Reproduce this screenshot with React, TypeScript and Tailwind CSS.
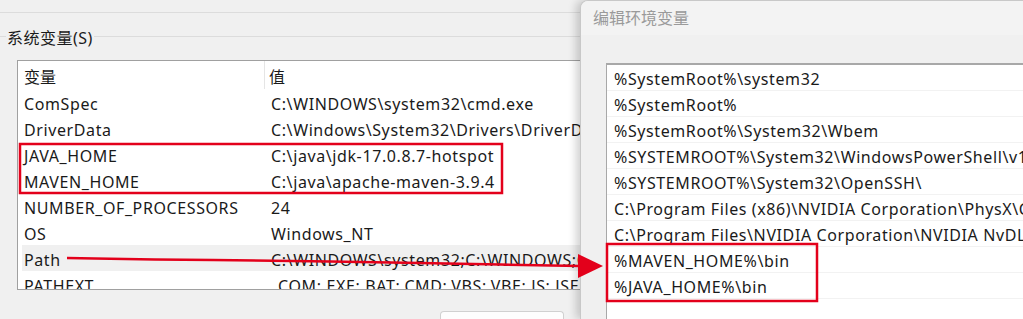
import React from "react";

const sysVars: [string, string][] = [
  ["ComSpec", "C:\\WINDOWS\\system32\\cmd.exe"],
  ["DriverData", "C:\\Windows\\System32\\Drivers\\DriverData"],
  ["JAVA_HOME", "C:\\java\\jdk-17.0.8.7-hotspot"],
  ["MAVEN_HOME", "C:\\java\\apache-maven-3.9.4"],
  ["NUMBER_OF_PROCESSORS", "24"],
  ["OS", "Windows_NT"],
  ["Path", "C:\\WINDOWS\\system32;C:\\WINDOWS;C:\\WINDOWS\\System32\\Wbem"],
  ["PATHEXT", ".COM;.EXE;.BAT;.CMD;.VBS;.VBE;.JS;.JSE;.WSF;.WSH;.MSC"],
];

const pathItems = [
  "%SystemRoot%\\system32",
  "%SystemRoot%",
  "%SystemRoot%\\System32\\Wbem",
  "%SYSTEMROOT%\\System32\\WindowsPowerShell\\v1.0\\",
  "%SYSTEMROOT%\\System32\\OpenSSH\\",
  "C:\\Program Files (x86)\\NVIDIA Corporation\\PhysX\\Common",
  "C:\\Program Files\\NVIDIA Corporation\\NVIDIA NvDLISR",
  "%MAVEN_HOME%\\bin",
  "%JAVA_HOME%\\bin",
];

const font = { fontFamily: '"Noto Sans", "Noto Sans CJK SC", sans-serif' };

function EnvVarsPanel() {
  return (
    <div className="w-[580px] h-[319px] shrink-0 overflow-hidden bg-[#f0f0f0]">
      <div className="h-[13px] border-b border-[#dcdcdc]" />
      <div className="flex items-center h-[48px] -mt-[1px] pt-[3px]">
        <div className="w-[6px] border-t border-[#dcdcdc] -mt-[3px]" />
        <span className="px-[1px] text-[16px] tracking-[0.5px] text-[#1a1a1a] leading-none">系统变量(S)</span>
        <div className="flex-1 border-t border-[#dcdcdc] -mt-[3px]" />
      </div>
      <div className="ml-[17px] h-[230px] border border-r-0 border-[#a0a0a0] bg-white overflow-hidden">
        <div className="flex h-[28px] items-center text-[16px] text-[#1a1a1a]">
          <div className="w-[247px] shrink-0 pl-[6px] pt-[4px] border-r border-[#e5e5e5] h-full flex items-center">变量</div>
          <div className="pl-[4px] pt-[4px]">值</div>
        </div>
        {sysVars.map(([name, value]) => (
          <div
            key={name}
            className={`flex h-[26px] pt-[3px] items-center text-[16px] tracking-[0.6px] text-[#1a1a1a] whitespace-nowrap ml-[4px] ${
              name === "Path" ? "bg-[#f0f0f0]" : ""
            }`}
          >
            <div className="w-[249px] shrink-0 pl-[2px]">{name}</div>
            <div className={`shrink-0 ${name === "PATHEXT" ? "pl-[3px]" : ""}`}>{value}</div>
          </div>
        ))}
      </div>
      <div className="flex justify-end pr-[16px] pt-[21px]">
        <div className="w-[124px] h-[10px] rounded-t-[4px] border border-b-0 border-[#d0d0d0] bg-[#fdfdfd]" />
      </div>
    </div>
  );
}

function EditDialog() {
  return (
    <div className="flex-1 h-[319px] bg-[#f0f0f0] rounded-tl-[8px] border-l border-t border-[#c8c8c8] shadow-[-4px_0_8px_rgba(0,0,0,0.18)] overflow-hidden relative z-10">
      <div className="h-[34px] bg-[#f3f3f3] flex items-center pl-[12px] text-[16px] text-[#9a9a9a]">
        编辑环境变量
      </div>
      <div className="pt-[28px] pl-[25px] bg-[#f0f0f0]">
        <div className="border-t-2 border-l border-[#a8a8a8] bg-white h-[300px]">
          {pathItems.map((p) => (
            <div
              key={p}
              className="h-[26px] pt-[3px] flex items-center pl-[7px] border-b border-[#f2f2f2] text-[16px] tracking-[0.6px] text-[#1a1a1a] whitespace-nowrap"
            >
              {p}
            </div>
          ))}
        </div>
      </div>
    </div>
  );
}

function Annotations() {
  return (
    <svg className="absolute inset-0 z-20 pointer-events-none" width="1023" height="319" viewBox="0 0 1023 319">
      <rect x="20" y="144" width="482" height="49" fill="none" stroke="#e3001b" strokeWidth="2.5" />
      <rect x="607" y="244" width="210" height="57" fill="none" stroke="#e3001b" strokeWidth="2.5" />
      <path
        d="M67 258 L95 258.5 L155 259.5 L213 260 L330 261.5 L420 263 L500 264.5 L580 266"
        fill="none"
        stroke="#e3001b"
        strokeWidth="2.5"
      />
      <polygon points="578,254 578,278 603,266" fill="#e3001b" />
    </svg>
  );
}

export default function App() {
  return (
    <div className="relative w-[1023px] h-[319px] overflow-hidden flex bg-[#f0f0f0]" style={font}>
      <EnvVarsPanel />
      <EditDialog />
      <Annotations />
    </div>
  );
}
